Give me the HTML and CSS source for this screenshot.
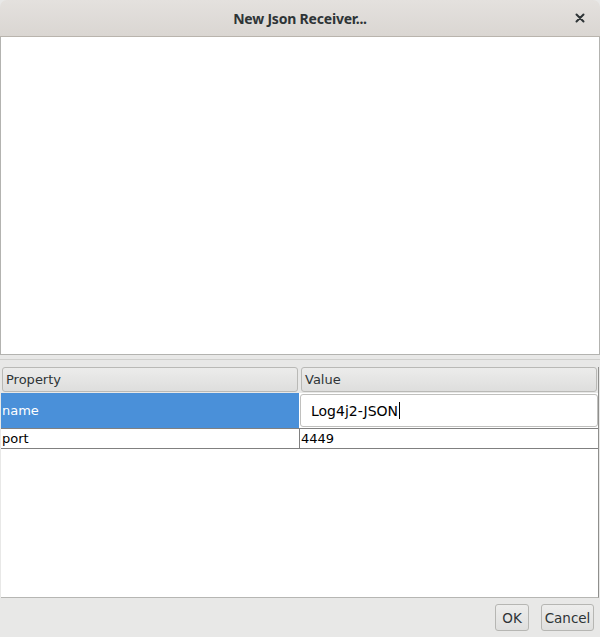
FILE: index.html
```html
<!DOCTYPE html>
<html>
<head>
<meta charset="utf-8">
<link rel="stylesheet" href="styles.css">
</head>
<body>
<div class="window">
  <div class="titlebar">
    <span class="title">New Json Receiver...</span>
    <span class="close">
      <svg width="10" height="10" viewBox="0 0 10 10"><path d="M1.5 1.5 L8.5 8.5 M8.5 1.5 L1.5 8.5" stroke="#2e3436" stroke-width="2" stroke-linecap="round"/></svg>
    </span>
  </div>
  <div class="top-pane"></div>
  <div class="splitter"></div>
  <div class="table">
    <div class="thead">
      <div class="th">Property</div>
      <div class="th">Value</div>
    </div>
    <div class="row selected">
      <div class="cell key">name</div>
      <div class="cell editor-cell"><div class="editor">Log4j2-JSON<span class="caret"></span></div></div>
    </div>
    <div class="row">
      <div class="cell key">port</div>
      <div class="cell val">4449</div>
    </div>
    <div class="table-fill"></div>
  </div>
  <div class="footer">
    <button class="btn btn-ok">OK</button>
    <button class="btn btn-cancel">Cancel</button>
  </div>
</div>
</body>
</html>
```
FILE: styles.css
```css
html, body {
  margin: 0;
  padding: 0;
  background: #ffffff;
}
.window {
  width: 600px;
  height: 637px;
  display: flex;
  flex-direction: column;
  background: #e8e8e7;
  font-family: "DejaVu Sans", sans-serif;
  font-size: 13px;
  color: #000;
}
.titlebar {
  height: 36px;
  flex: none;
  border-radius: 7px 7px 0 0;
  background: linear-gradient(#e4e1de, #dad6d2);
  border-bottom: 1px solid #b9b4ad;
  display: flex;
  align-items: center;
  justify-content: center;
  position: relative;
}
.title {
  font-family: "Noto Sans", "Open Sans", sans-serif;
  font-weight: bold;
  font-size: 14px;
  color: #2e3436;
  letter-spacing: -0.2px;
}
.close {
  position: absolute;
  right: 15px;
  top: 13px;
  width: 10px;
  height: 10px;
  display: flex;
}
.top-pane {
  height: 317px;
  flex: none;
  background: #ffffff;
  border: 1px solid #b3b3b0;
  border-top: none;
}
.splitter {
  height: 4px;
  flex: none;
  border-bottom: 1px solid #cfcfcd;
  margin-bottom: 7px;
}
.table {
  flex: 1;
  display: flex;
  flex-direction: column;
  margin: 0 1px 0 1px;
  border-right: 1px solid #8f8f8d;
  border-bottom: 1px solid #b6b6b3;
  background: #ffffff;
}
.thead {
  display: flex;
  gap: 3px;
  padding: 0 1px 1px 1px;
  background: #e8e8e7;
  height: 25px;
  flex: none;
}
.th {
  flex: 1;
  border: 1px solid #b9b9b6;
  border-radius: 3px;
  background: linear-gradient(#ececeb, #dededd);
  display: flex;
  align-items: center;
  padding-left: 3px;
  color: #2e3436;
  font-size: 13px;
}
.row {
  display: flex;
  flex: none;
}
.row.selected {
  height: 36px;
  background: #4a90d9;
}
.row.selected .key {
  color: #ffffff;
  border-bottom: 1px solid #808080;
}
.cell {
  display: flex;
  align-items: center;
}
.key {
  width: 297px;
  padding-left: 1px;
}
.row:not(.selected) {
  height: 19px;
  border-bottom: 1px solid #808080;
}
.row:not(.selected) .key {
  border-right: 1px solid #808080;
}
.val {
  flex: 1;
  padding-left: 1px;
}
.editor-cell {
  flex: 1;
  background: #ffffff;
  border-bottom: 1px solid #808080;
  padding: 1px 0 0 1px;
  align-items: stretch;
}
.editor {
  flex: 1;
  border: 1px solid #c0c0be;
  border-radius: 3px;
  display: flex;
  align-items: center;
  padding-left: 10px;
  margin-bottom: 1px;
  font-size: 14px;
}
.caret {
  display: inline-block;
  width: 1px;
  height: 17px;
  background: #000;
  margin-left: 1px;
}
.table-fill {
  flex: 1;
}
.footer {
  height: 39px;
  flex: none;
  display: flex;
  justify-content: flex-end;
  align-items: flex-start;
  gap: 12px;
  padding: 6px 6px 0 0;
  box-sizing: border-box;
}
.btn {
  height: 27px;
  border: 1px solid #b6b6b3;
  border-radius: 3px;
  background: linear-gradient(#ededec, #dfdfde);
  font-family: "DejaVu Sans", sans-serif;
  font-size: 13.5px;
  color: #2e3436;
  padding: 0;
  margin: 0;
}
.btn-ok {
  width: 34px;
}
.btn-cancel {
  width: 53px;
}
```
